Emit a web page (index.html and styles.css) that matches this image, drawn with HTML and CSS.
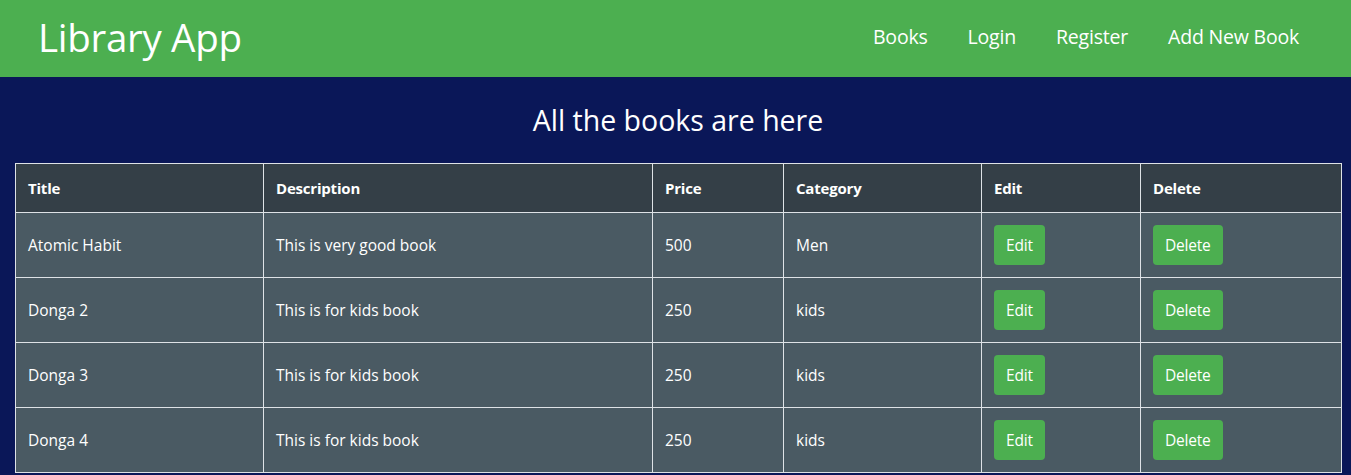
FILE: index.html
```html
<!DOCTYPE html>
<html lang="en">
<head>
<meta charset="utf-8">
<title>Library App</title>
<link rel="stylesheet" href="styles.css">
</head>
<body>
<header class="topbar">
  <div class="brand">Library App</div>
  <nav class="nav">
    <a href="#">Books</a>
    <a href="#">Login</a>
    <a href="#">Register</a>
    <a href="#">Add New Book</a>
  </nav>
</header>
<main class="content">
  <h1 class="heading">All the books are here</h1>
  <table class="books">
    <colgroup>
      <col class="c-title"><col class="c-desc"><col class="c-price"><col class="c-cat"><col class="c-edit"><col class="c-del">
    </colgroup>
    <thead>
      <tr><th>Title</th><th>Description</th><th>Price</th><th>Category</th><th>Edit</th><th>Delete</th></tr>
    </thead>
    <tbody>
      <tr><td>Atomic Habit</td><td>This is very good book</td><td>500</td><td>Men</td><td><button class="btn">Edit</button></td><td><button class="btn">Delete</button></td></tr>
      <tr><td>Donga 2</td><td>This is for kids book</td><td>250</td><td>kids</td><td><button class="btn">Edit</button></td><td><button class="btn">Delete</button></td></tr>
      <tr><td>Donga 3</td><td>This is for kids book</td><td>250</td><td>kids</td><td><button class="btn">Edit</button></td><td><button class="btn">Delete</button></td></tr>
      <tr><td>Donga 4</td><td>This is for kids book</td><td>250</td><td>kids</td><td><button class="btn">Edit</button></td><td><button class="btn">Delete</button></td></tr>
    </tbody>
  </table>
</main>
</body>
</html>
```
FILE: styles.css
```css
* { box-sizing: border-box; }
html, body { margin: 0; padding: 0; }
body {
  background: #0a1758;
  font-family: "Open Sans", "Noto Sans", sans-serif;
  color: #fff;
}
.topbar {
  background: #4caf50;
  height: 77px;
  display: flex;
  align-items: center;
  justify-content: space-between;
  padding: 0 52px 4px 38px;
}
.brand {
  font-size: 38.5px;
  font-weight: 400;
  letter-spacing: -0.3px;
}
.nav {
  display: flex;
  gap: 40px;
}
.nav a {
  color: #fff;
  text-decoration: none;
  font-size: 19.5px;
  letter-spacing: -0.2px;
}
.content {
  padding: 0 10px 0 15px;
}
.heading {
  margin: 0;
  padding: 21px 0 20px;
  text-align: center;
  font-weight: 400;
  font-size: 28.5px;
  line-height: 45px;
  letter-spacing: 0;
}
.books {
  width: 1326px;
  border-collapse: collapse;
  table-layout: fixed;
  font-size: 15.5px;
}
.c-title { width: 248px; }
.c-desc { width: 389px; }
.c-price { width: 131px; }
.c-cat { width: 198px; }
.c-edit { width: 159px; }
.c-del { width: 201px; }
.books th, .books td {
  border: 1px solid #dee2e6;
  padding: 0 12px;
  text-align: left;
}
.books th {
  background: #343f47;
  font-weight: 700;
  font-size: 15px;
  letter-spacing: -0.2px;
  height: 49px;
}
.books td {
  background: #4a5a63;
  height: 65px;
}
.btn {
  background: #4caf50;
  color: #fff;
  border: none;
  border-radius: 4px;
  font-family: inherit;
  font-size: 15.5px;
  letter-spacing: -0.2px;
  height: 40px;
  padding: 0 12px;
}
```
